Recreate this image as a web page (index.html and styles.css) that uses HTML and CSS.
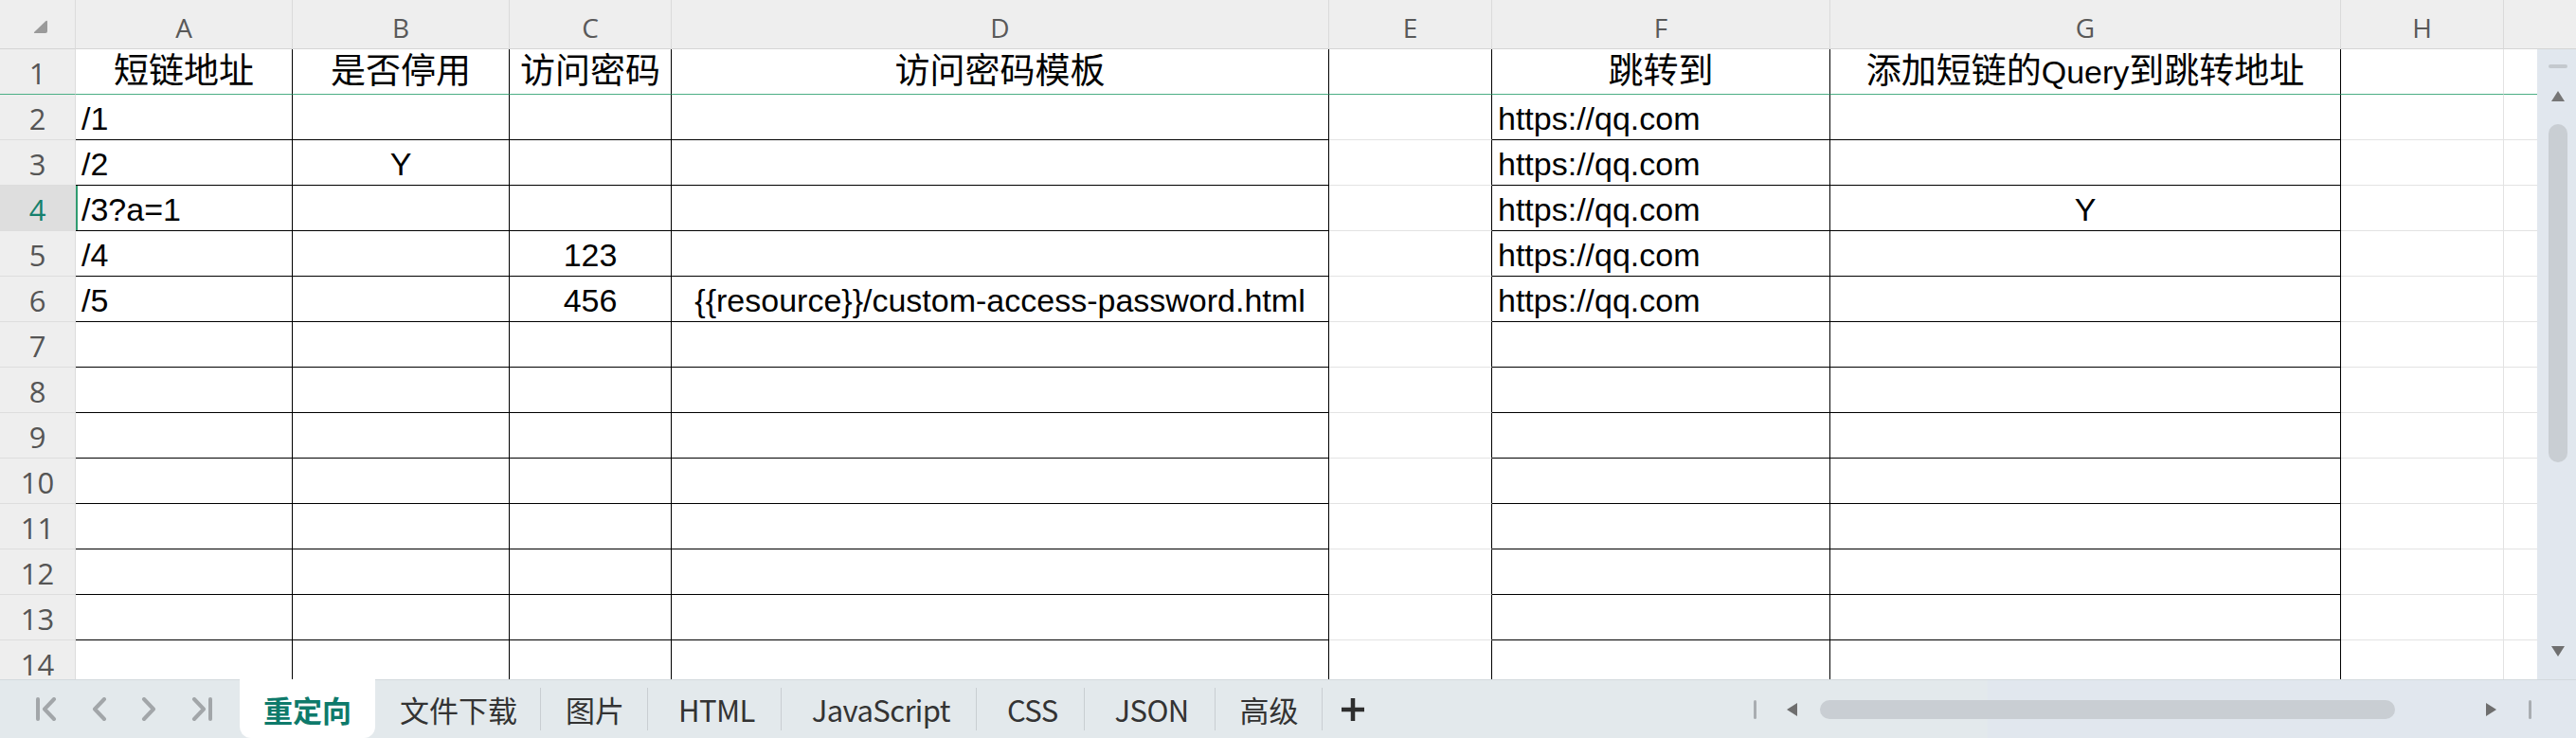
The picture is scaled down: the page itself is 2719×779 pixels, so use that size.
FILE: index.html
```html
<!DOCTYPE html>
<html lang="zh-CN">
<head>
<meta charset="utf-8">
<title>短链配置</title>
<link rel="stylesheet" href="styles.css">
</head>
<body>
<div class="app">
  <div class="sheet">
    <div class="colhead">
      <div class="corner"><svg width="15" height="14" viewBox="0 0 15 14"><path d="M13 1.5 Q15 0 15 2 L15 12 Q15 14 13 14 L2 14 Q0 14 1.5 12.5 Z" fill="#9a9a9a"/></svg></div>
      <div class="ch">A</div>
      <div class="ch">B</div>
      <div class="ch">C</div>
      <div class="ch">D</div>
      <div class="ch">E</div>
      <div class="ch">F</div>
      <div class="ch">G</div>
      <div class="ch">H</div>
      <div class="ch last"></div>
    </div>
    <div class="body">
      <div class="rows">
        <div class="row first">
          <div class="rh">1</div>
          <div class="c k ctr">短链地址</div>
          <div class="c k ctr">是否停用</div>
          <div class="c k ctr">访问密码</div>
          <div class="c k ctr">访问密码模板</div>
          <div class="c e"></div>
          <div class="c k ctr">跳转到</div>
          <div class="c k ctr"><span>添加短链的<span class="q">Query</span>到跳转地址</span></div>
          <div class="c"></div>
          <div class="c last"></div>
        </div>
        <div class="row">
          <div class="rh">2</div>
          <div class="c k">/1</div>
          <div class="c k"></div>
          <div class="c k"></div>
          <div class="c k"></div>
          <div class="c e"></div>
          <div class="c k">https://qq.com</div>
          <div class="c k"></div>
          <div class="c"></div>
          <div class="c last"></div>
        </div>
        <div class="row">
          <div class="rh">3</div>
          <div class="c k">/2</div>
          <div class="c k ctr">Y</div>
          <div class="c k"></div>
          <div class="c k"></div>
          <div class="c e"></div>
          <div class="c k">https://qq.com</div>
          <div class="c k"></div>
          <div class="c"></div>
          <div class="c last"></div>
        </div>
        <div class="row">
          <div class="rh sel">4</div>
          <div class="c k active">/3?a=1</div>
          <div class="c k"></div>
          <div class="c k"></div>
          <div class="c k"></div>
          <div class="c e"></div>
          <div class="c k">https://qq.com</div>
          <div class="c k ctr">Y</div>
          <div class="c"></div>
          <div class="c last"></div>
        </div>
        <div class="row">
          <div class="rh">5</div>
          <div class="c k">/4</div>
          <div class="c k"></div>
          <div class="c k ctr">123</div>
          <div class="c k"></div>
          <div class="c e"></div>
          <div class="c k">https://qq.com</div>
          <div class="c k"></div>
          <div class="c"></div>
          <div class="c last"></div>
        </div>
        <div class="row">
          <div class="rh">6</div>
          <div class="c k">/5</div>
          <div class="c k"></div>
          <div class="c k ctr">456</div>
          <div class="c k ctr">{{resource}}/custom-access-password.html</div>
          <div class="c e"></div>
          <div class="c k">https://qq.com</div>
          <div class="c k"></div>
          <div class="c"></div>
          <div class="c last"></div>
        </div>
        <div class="row"><div class="rh">7</div><div class="c k"></div><div class="c k"></div><div class="c k"></div><div class="c k"></div><div class="c e"></div><div class="c k"></div><div class="c k"></div><div class="c"></div><div class="c last"></div></div>
        <div class="row"><div class="rh">8</div><div class="c k"></div><div class="c k"></div><div class="c k"></div><div class="c k"></div><div class="c e"></div><div class="c k"></div><div class="c k"></div><div class="c"></div><div class="c last"></div></div>
        <div class="row"><div class="rh">9</div><div class="c k"></div><div class="c k"></div><div class="c k"></div><div class="c k"></div><div class="c e"></div><div class="c k"></div><div class="c k"></div><div class="c"></div><div class="c last"></div></div>
        <div class="row"><div class="rh">10</div><div class="c k"></div><div class="c k"></div><div class="c k"></div><div class="c k"></div><div class="c e"></div><div class="c k"></div><div class="c k"></div><div class="c"></div><div class="c last"></div></div>
        <div class="row"><div class="rh">11</div><div class="c k"></div><div class="c k"></div><div class="c k"></div><div class="c k"></div><div class="c e"></div><div class="c k"></div><div class="c k"></div><div class="c"></div><div class="c last"></div></div>
        <div class="row"><div class="rh">12</div><div class="c k"></div><div class="c k"></div><div class="c k"></div><div class="c k"></div><div class="c e"></div><div class="c k"></div><div class="c k"></div><div class="c"></div><div class="c last"></div></div>
        <div class="row"><div class="rh">13</div><div class="c k"></div><div class="c k"></div><div class="c k"></div><div class="c k"></div><div class="c e"></div><div class="c k"></div><div class="c k"></div><div class="c"></div><div class="c last"></div></div>
        <div class="row"><div class="rh">14</div><div class="c k"></div><div class="c k"></div><div class="c k"></div><div class="c k"></div><div class="c e"></div><div class="c k"></div><div class="c k"></div><div class="c"></div><div class="c last"></div></div>
      </div>
      <div class="vscroll">
        <div class="vdash"></div>
        <svg class="vtri up" width="14" height="11" viewBox="0 0 14 11"><path d="M7 0 L14 11 L0 11 Z" fill="#767676"/></svg>
        <div class="vthumb"></div>
        <svg class="vtri down" width="14" height="11" viewBox="0 0 14 11"><path d="M0 0 L14 0 L7 11 Z" fill="#6f6f6f"/></svg>
      </div>
    </div>
  </div>
  <div class="tabbar">
    <div class="nav">
      <svg class="nv" width="23" height="25" viewBox="0 0 23 25"><path d="M3 2 V23" stroke="#a2a6a9" stroke-width="4" stroke-linecap="round" fill="none"/><path d="M20 2 L10 12.5 L20 23" stroke="#a2a6a9" stroke-width="4" stroke-linecap="round" stroke-linejoin="round" fill="none"/></svg>
      <svg class="nv" width="17" height="25" viewBox="0 0 17 25"><path d="M14 2 L4 12.5 L14 23" stroke="#a2a6a9" stroke-width="4" stroke-linecap="round" stroke-linejoin="round" fill="none"/></svg>
      <svg class="nv" width="17" height="25" viewBox="0 0 17 25"><path d="M3 2 L13 12.5 L3 23" stroke="#a2a6a9" stroke-width="4" stroke-linecap="round" stroke-linejoin="round" fill="none"/></svg>
      <svg class="nv" width="23" height="25" viewBox="0 0 23 25"><path d="M3 2 L13 12.5 L3 23" stroke="#a2a6a9" stroke-width="4" stroke-linecap="round" stroke-linejoin="round" fill="none"/><path d="M20 2 V23" stroke="#a2a6a9" stroke-width="4" stroke-linecap="round" fill="none"/></svg>
    </div>
    <div class="tab active">重定向</div>
    <div class="tab">文件下载</div>
    <div class="sep"></div>
    <div class="tab">图片</div>
    <div class="sep"></div>
    <div class="tab lat">HTML</div>
    <div class="sep"></div>
    <div class="tab lat">JavaScript</div>
    <div class="sep"></div>
    <div class="tab lat">CSS</div>
    <div class="sep"></div>
    <div class="tab lat">JSON</div>
    <div class="sep"></div>
    <div class="tab">高级</div>
    <div class="sep"></div>
    <div class="plus"><svg width="26" height="26" viewBox="0 0 26 26"><path d="M13 1 V25 M1 13 H25" stroke="#2e2e2e" stroke-width="4.5" fill="none"/></svg></div>
    <div class="hscroll">
      <div class="hbar"></div>
      <svg class="htri l" width="11" height="14" viewBox="0 0 11 14"><path d="M11 0 L11 14 L0 7 Z" fill="#6e6e6e"/></svg>
      <div class="hthumb"></div>
      <svg class="htri r" width="11" height="14" viewBox="0 0 11 14"><path d="M0 0 L11 7 L0 14 Z" fill="#6e6e6e"/></svg>
      <div class="hbar end"></div>
    </div>
  </div>
</div>
</body>
</html>
```

FILE: styles.css
```css
:root {
  --cols: 80px 229px 229px 171px 694px 172px 357px 539px 172px 1fr;
}
* { box-sizing: border-box; }
html, body {
  margin: 0;
  padding: 0;
}
body {
  width: 2719px;
  height: 779px;
  overflow: hidden;
  background: #ffffff;
  font-family: "Liberation Sans", "Noto Sans CJK SC", sans-serif;
}
.app {
  display: flex;
  flex-direction: column;
  height: 779px;
}
.sheet {
  height: 717px;
  display: flex;
  flex-direction: column;
  overflow: hidden;
  flex: none;
}
.colhead {
  display: grid;
  grid-template-columns: var(--cols);
  height: 52px;
  flex: none;
}
.corner {
  background: #eeeeee;
  border-right: 1px solid #dcdcdc;
  border-bottom: 1px solid #d5d5d5;
  padding: 21px 0 0 35px;
}
.corner svg { display: block; }
.ch {
  background: #eeeeee;
  border-right: 1px solid #dadada;
  border-bottom: 1px solid #d5d5d5;
  display: flex;
  align-items: flex-end;
  justify-content: center;
  padding-bottom: 3px;
  font-family: "Open Sans", sans-serif;
  font-size: 28px;
  color: #595959;
}
.ch.last { border-right: none; }
.body {
  display: flex;
  flex: 1;
  min-height: 0;
}
.rows {
  flex: 1;
  overflow: hidden;
}
.row {
  display: grid;
  grid-template-columns: var(--cols);
  height: 48px;
}
.rh {
  background: #eeeeee;
  border-right: 1px solid #dcdcdc;
  border-bottom: 1px solid #dddddd;
  display: flex;
  align-items: flex-end;
  justify-content: center;
  padding-bottom: 1px;
  font-family: "Open Sans", sans-serif;
  font-size: 31px;
  color: #555555;
}
.rh.sel {
  background: #dedede;
  color: #16806d;
}
.c {
  border-right: 1px solid #e3e3e3;
  border-bottom: 1px solid #e3e3e3;
  display: flex;
  align-items: flex-end;
  padding: 0 6px 2px;
  font-size: 34px;
  color: #000000;
  white-space: nowrap;
  overflow: hidden;
}
.c.k { border-color: #000000; }
.c.e { border-right-color: #000000; }
.c.last { border-right: none; }
.c.ctr { justify-content: center; }
.c.active { box-shadow: inset 2px 0 0 #2f9b70; }
.row.first .c,
.row.first .rh {
  border-bottom-color: #4caf85;
}
.row.first .c {
  font-size: 37px;
  padding-bottom: 0;
}
.row.first .c .q { font-size: 34px; }

.vscroll {
  width: 41px;
  flex: none;
  background: #e1e7ee;
  display: flex;
  flex-direction: column;
  align-items: flex-start;
  padding-left: 12px;
}
.vdash {
  margin-top: 16px;
  width: 20px;
  height: 4px;
  border-radius: 2px;
  background: #c4c9ce;
}
.vtri { display: block; margin-left: 3px; }
.vtri.up { margin-top: 24px; }
.vthumb {
  margin-top: 24px;
  width: 20px;
  height: 357px;
  border-radius: 10px;
  background: #c9ced3;
}
.vtri.down { margin-top: auto; margin-bottom: 24px; }

.tabbar {
  height: 62px;
  flex: none;
  display: flex;
  align-items: stretch;
  background: linear-gradient(to right, #e3e9ec 2098px, #e1e7ee 2098px);
  border-top: 1px solid #d3d9dd;
  font-family: "Noto Sans CJK SC", sans-serif;
  font-size: 31px;
  color: #333333;
}
.nav {
  width: 253px;
  flex: none;
  display: flex;
  align-items: center;
  padding-left: 37px;
  gap: 36px;
}
.nv { display: block; }
.tab {
  display: flex;
  align-items: center;
  padding: 0 24px 0 26px;
  white-space: nowrap;
}
.tab.lat {
  padding: 0 27px 0 32px;
  letter-spacing: -0.6px;
}
.tab.active {
  background: #ffffff;
  color: #0e7a6b;
  font-weight: 700;
  margin-top: -1px;
  padding: 0 25px;
  border-radius: 0 0 12px 12px;
}
.sep {
  width: 1px;
  height: 45px;
  align-self: center;
  background: #c9ced2;
}
.plus {
  display: flex;
  align-items: center;
  padding: 0 17px 0 19px;
}
.plus svg { display: block; }
.hscroll {
  margin-left: auto;
  width: 879px;
  display: flex;
  align-items: center;
}
.hbar {
  margin-left: 11px;
  width: 3px;
  height: 20px;
  border-radius: 1.5px;
  background: #a9adb1;
}
.hbar.end { margin-left: 34px; }
.htri { display: block; }
.htri.l { margin-left: 32px; }
.hthumb {
  margin-left: 24px;
  width: 607px;
  height: 20px;
  border-radius: 10px;
  background: #c9ced3;
}
.htri.r { margin-left: 96px; }
```
